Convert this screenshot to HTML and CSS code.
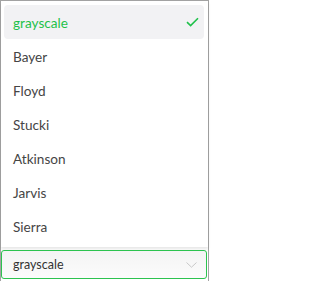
FILE: index.html
```html
<!DOCTYPE html>
<html>
<head>
<meta charset="utf-8">
<link rel="stylesheet" href="styles.css">
</head>
<body>
<div class="frame">
  <div class="popup">
    <ul class="list">
      <li class="item selected"><span>grayscale</span>
        <svg class="check" width="13" height="10" viewBox="0 0 13 10"><path d="M1 5.2 L4.6 8.6 L12 1.2" fill="none" stroke="#1fc14a" stroke-width="1.6"/></svg>
      </li>
      <li class="item"><span>Bayer</span></li>
      <li class="item"><span>Floyd</span></li>
      <li class="item"><span>Stucki</span></li>
      <li class="item"><span>Atkinson</span></li>
      <li class="item"><span>Jarvis</span></li>
      <li class="item"><span>Sierra</span></li>
    </ul>
  </div>
  <div class="select">
    <span>grayscale</span>
    <svg class="chev" width="11" height="6" viewBox="0 0 11 6"><path d="M0.5 0.5 L5.5 5.2 L10.5 0.5" fill="none" stroke="#c8c8c8" stroke-width="1"/></svg>
  </div>
</div>
</body>
</html>
```
FILE: styles.css
```css
html, body {
  margin: 0;
  padding: 0;
  background: #ffffff;
}
.frame {
  width: 209px;
  height: 281px;
  box-sizing: border-box;
  border: 1px solid #a3a3a3;
  border-bottom: none;
  font-family: Lato, "Liberation Sans", sans-serif;
  display: flex;
  flex-direction: column;
}
.popup {
  background: #ffffff;
  padding: 4px 4px 4px 3px;
  box-shadow: 0 2px 3px rgba(0, 0, 0, 0.10);
}
.list {
  list-style: none;
  margin: 0;
  padding: 0;
}
.item {
  height: 34px;
  box-sizing: border-box;
  display: flex;
  align-items: center;
  justify-content: space-between;
  padding: 1px 5px 0 9px;
  font-size: 13.6px;
  color: #454545;
  border-radius: 4px;
}
.item.selected {
  background: #f2f2f4;
  color: #1fc14a;
}
.check {
  display: block;
  margin-top: -1px;
}
.select {
  margin-top: 3px;
  width: 206px;
  height: 29px;
  box-sizing: border-box;
  border: 1px solid #2cc34f;
  border-radius: 3px;
  background: linear-gradient(#f4f4f4, #fbfbfb);
  display: flex;
  align-items: center;
  justify-content: space-between;
  padding: 0 9px 0 11px;
  font-size: 12.5px;
  color: #333333;
}
.chev {
  display: block;
}
```
